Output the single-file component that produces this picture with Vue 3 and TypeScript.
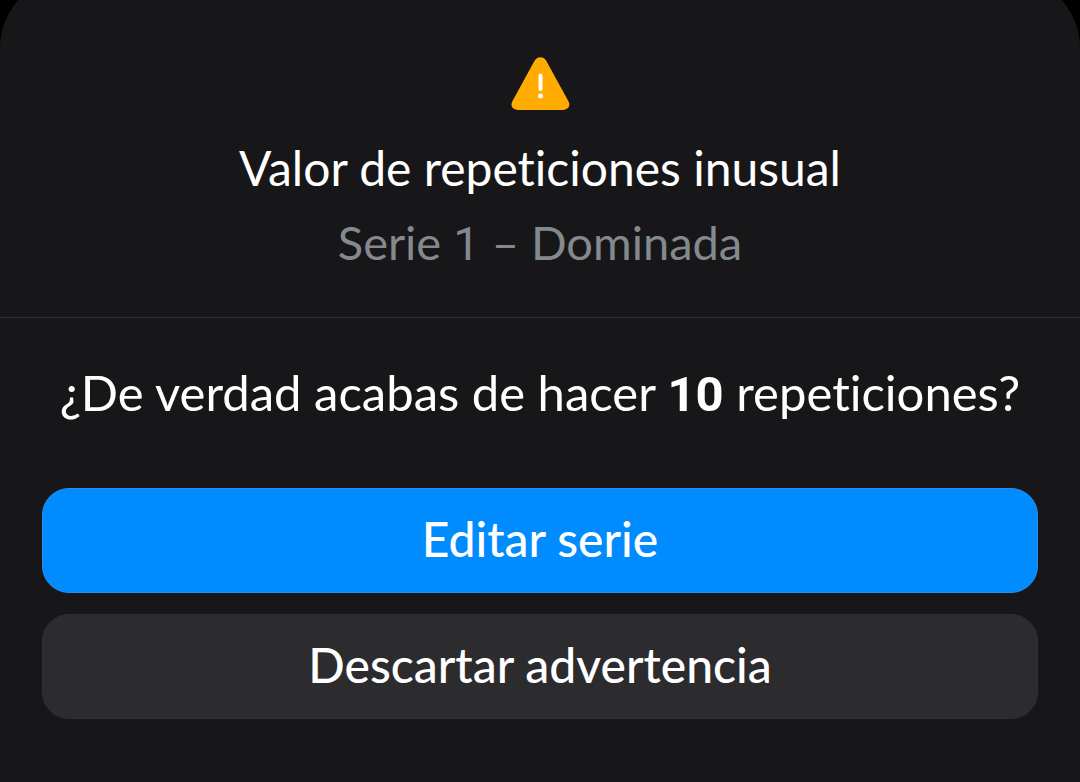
<script setup lang="ts">
import { ref } from 'vue'

const open = ref(true)
const setNumber = 1
const exercise = 'Dominada'
const reps = 10

function close(): void {
  open.value = false
}
</script>

<template>
  <div class="screen">
    <main v-if="open" class="sheet" role="alertdialog" aria-labelledby="title" aria-describedby="question">
      <header class="head">
        <svg class="warning" viewBox="0 0 60 54" aria-hidden="true">
          <path
            d="M24.7 3.6Q26.7 0.2 30.4 0.2T36.1 3.6L58.3 44Q60.2 47.6 58.5 50.3T53.4 53H7.4Q4 53 2.3 50.3T2.5 44Z"
            fill="#ffab00"
          />
          <path d="M30.5 18.6V32" stroke="#fff" stroke-width="4" stroke-linecap="round" />
          <circle cx="30.5" cy="39" r="2.5" fill="#fff" />
        </svg>
        <h1 id="title" class="title">Valor de repeticiones inusual</h1>
        <p class="subtitle">Serie <span class="number">{{ setNumber }}</span> – {{ exercise }}</p>
      </header>
      <section class="body">
        <p id="question" class="question">
          ¿De verdad acabas de hacer <strong class="number reps">{{ reps }}</strong> repeticiones?
        </p>
        <div class="actions">
          <button type="button" class="action primary" @click="close">Editar serie</button>
          <button type="button" class="action" @click="close">Descartar advertencia</button>
        </div>
      </section>
    </main>
  </div>
</template>

<style>
body {
  margin: 0;
  background: #000;
}
</style>

<style scoped>
.screen {
  display: flex;
  min-height: 100vh;
  overflow: hidden;
  background: #000;
}
.sheet {
  flex: 1;
  min-width: 0;
  margin-top: -24px;
  border-radius: 72px 72px 0 0;
  background: #171719;
  color: #fff;
  font-family: Lato, "Open Sans", sans-serif;
  font-size: 48px;
  font-variant-ligatures: none;
  line-height: 74px;
  text-align: center;
}
.head {
  display: flex;
  flex-direction: column;
  align-items: center;
  padding: 81px 40px 36px;
  border-bottom: 1px solid #2e2e30;
}
.warning {
  width: 60px;
  height: 54px;
  margin-bottom: 20px;
}
.title,
.subtitle,
.question {
  margin: 0;
  font-size: inherit;
  font-weight: 400;
}
.subtitle {
  color: #84898e;
  font-size: 47px;
}
.body {
  padding: 37px 42px 64px;
}
.question {
  margin: 0 -20px;
  font-size: 49px;
}
.number {
  font-family: Roboto, sans-serif;
}
.reps {
  font-weight: 700;
}
.actions {
  display: grid;
  gap: 21px;
  margin-top: 56px;
}
.action {
  height: 105px;
  padding: 0 24px 3px;
  border: 1px solid #303032;
  border-radius: 27px;
  background: #2c2c2e;
  color: inherit;
  font: inherit;
  font-variant-ligatures: none;
  font-weight: 500;
  cursor: pointer;
}
.primary {
  border-color: #268ff2;
  background: #008cff;
}
</style>
